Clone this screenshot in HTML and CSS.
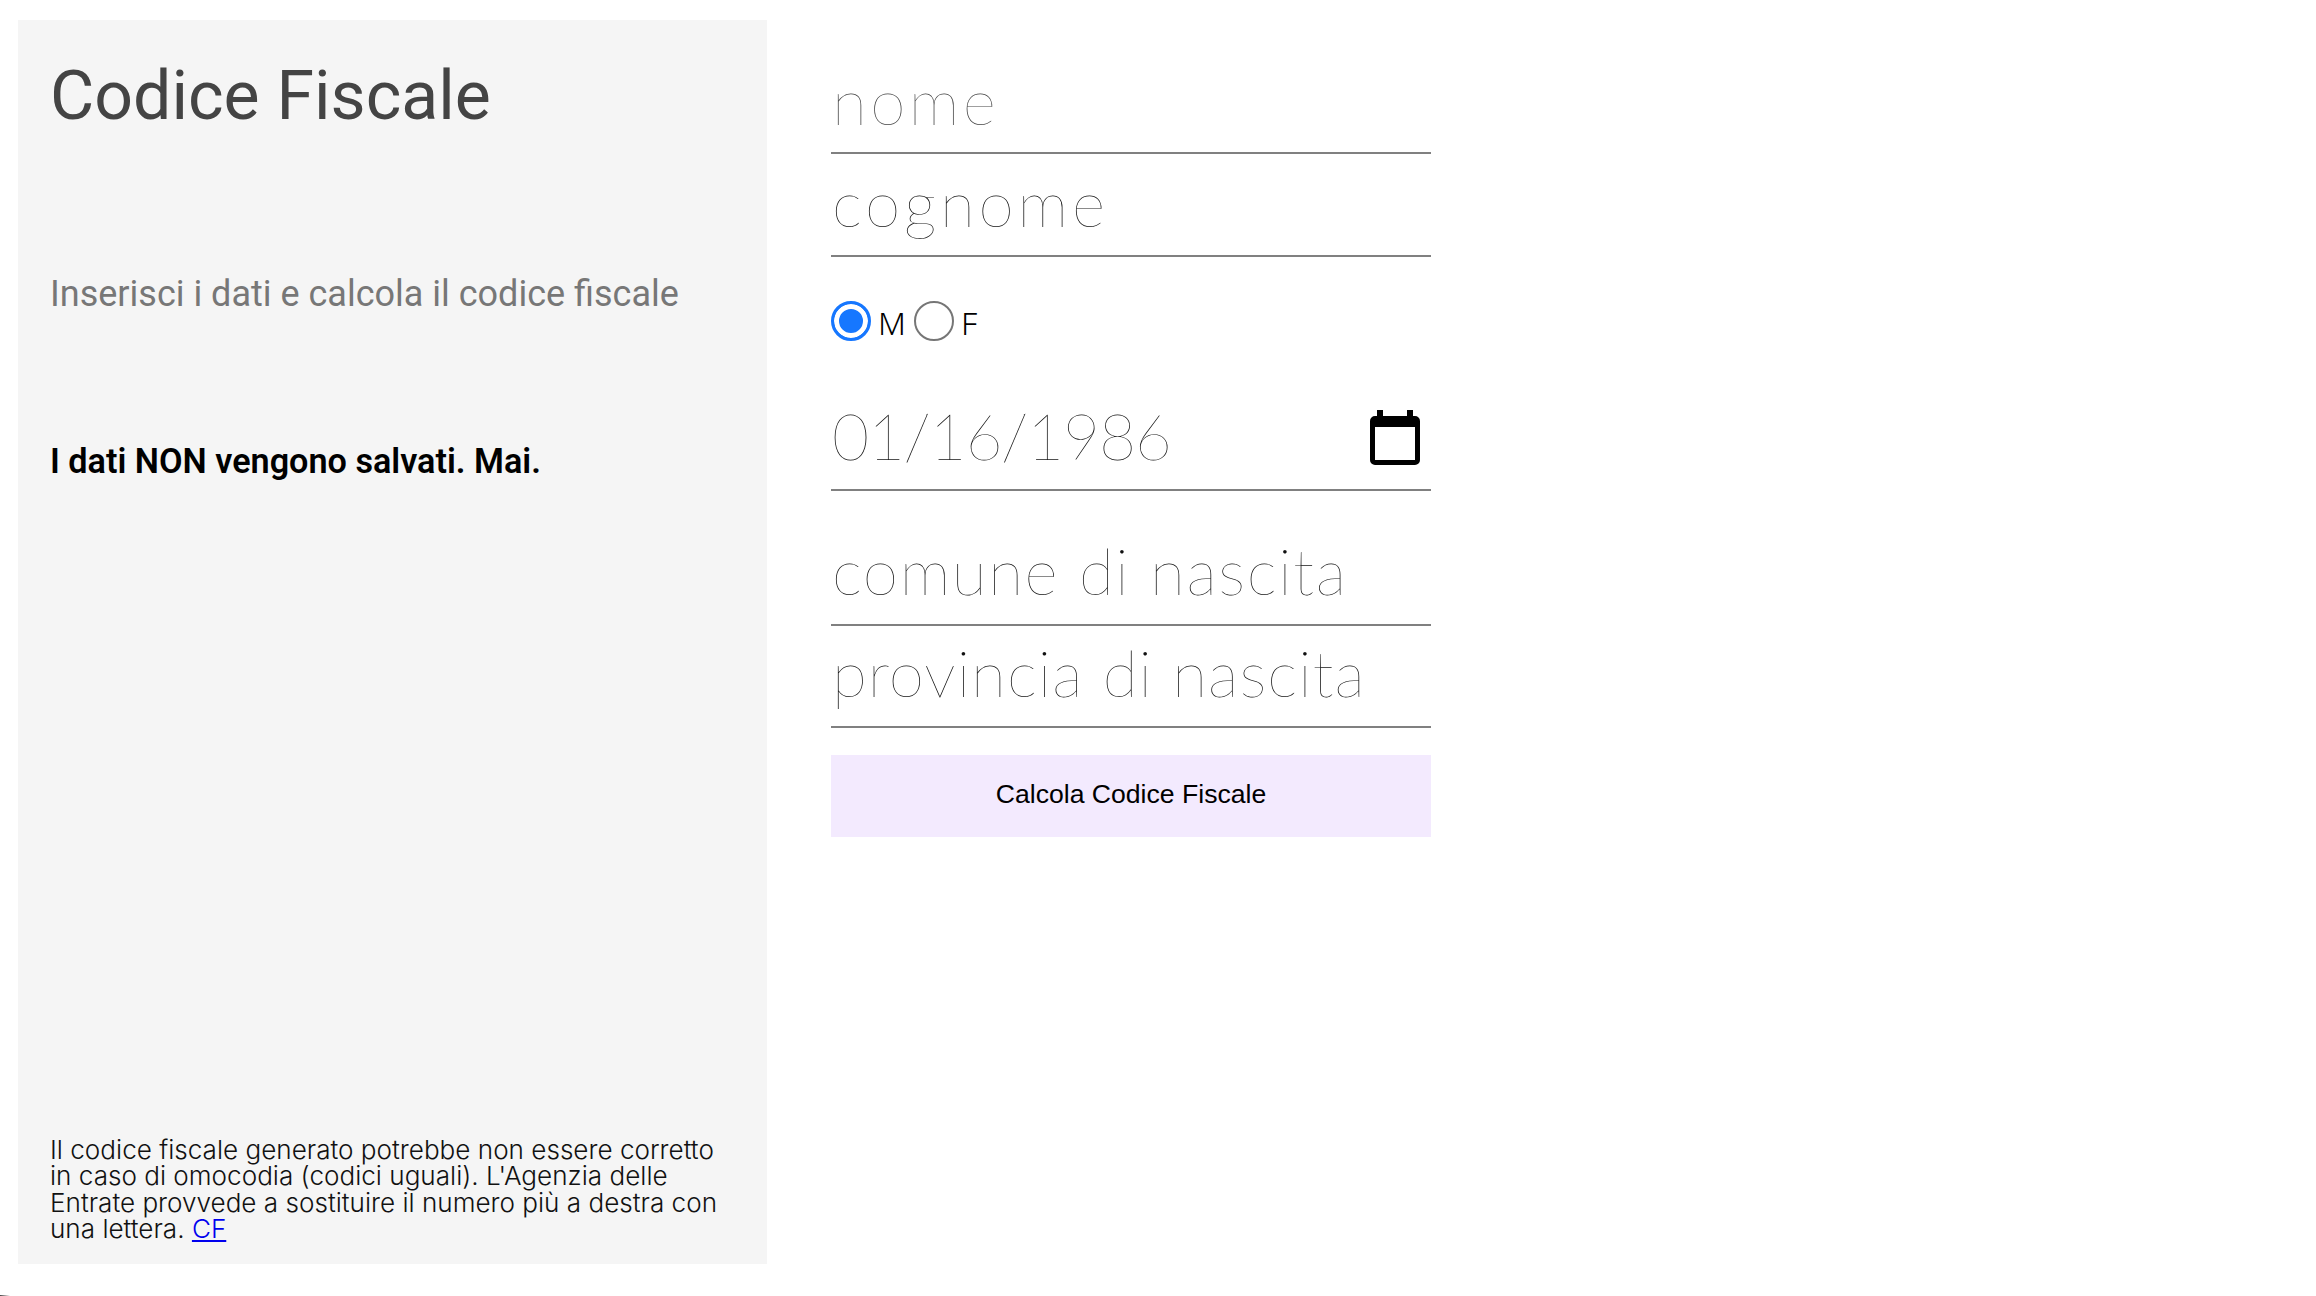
FILE: index.html
```html
<!DOCTYPE html>
<html lang="it">
<head>
    <meta charset="UTF-8">
    <title>Codice Fiscale</title>
    <link rel="stylesheet" href="styles.css">
</head>
<body>
<div class="page">
    <div class="side">
        <h1>Codice Fiscale</h1>
        <p class="intro">Inserisci i dati e calcola il codice fiscale</p>
        <p class="notice">I dati NON vengono salvati. Mai.</p>
        <p class="note">Il codice fiscale generato potrebbe non essere corretto in caso di omocodia (codici uguali). L'Agenzia delle Entrate provvede a sostituire il numero più a destra con una lettera. <a href="#">CF</a></p>
    </div>
    <form class="form">
        <div class="field field-nome">nome</div>
        <div class="field field-cognome">cognome</div>
        <div class="gender">
            <input type="radio" name="sex" id="m" checked>
            <label for="m">M</label>
            <input type="radio" name="sex" id="f">
            <label for="f">F</label>
        </div>
        <div class="field field-date">
            <span>01/16/1986</span>
            <svg class="cal" viewBox="0 0 50 55" width="50" height="55">
                <path d="M7 0h6v6h24V0h6v6h2a5 5 0 0 1 5 5v39a5 5 0 0 1-5 5H5a5 5 0 0 1-5-5V11a5 5 0 0 1 5-5h2z M5 17v33h40V17z" fill="#000" fill-rule="evenodd"/>
            </svg>
        </div>
        <div class="field field-comune">comune di nascita</div>
        <div class="field field-provincia">provincia di nascita</div>
        <button type="button" class="calc">Calcola Codice Fiscale</button>
    </form>
</div>
<div class="corner"></div>
</body>
</html>
```

FILE: styles.css
```css
*{
    margin: 0;
    padding: 0;
    box-sizing: border-box;
}
body{
    background: #fff;
}
.page{
    display: flex;
    padding: 20px 0 0 18px;
}
.side{
    display: flex;
    flex-direction: column;
    width: 749px;
    height: 1244px;
    padding: 0 30px 21px 32px;
    background: #f5f5f5;
    font-family: Roboto, sans-serif;
}
h1{
    margin-top: 36px;
    font-size: 68px;
    line-height: 80px;
    font-weight: 400;
    color: #444;
}
.intro{
    margin-top: 136px;
    font-size: 36px;
    line-height: 44px;
    font-weight: 400;
    color: #777;
}
.notice{
    margin-top: 125px;
    font-size: 34.2px;
    line-height: 40px;
    font-weight: 600;
    color: #000;
}
.note{
    margin-top: auto;
    font-family: Inter, sans-serif;
    font-size: 26.1px;
    line-height: 26.6px;
    font-weight: 300;
    color: #111;
}
.note a{
    color: #0000ee;
}
.form{
    width: 600px;
    margin-left: 64px;
}
.field{
    display: flex;
    justify-content: space-between;
    align-items: flex-end;
    padding: 0 0 21px 1px;
    border-bottom: 2px solid #808080;
    font-family: Lato, sans-serif;
    font-size: 64px;
    line-height: 64px;
    font-weight: 100;
    color: #111;
}
.field-nome{
    height: 134px;
    padding-bottom: 19px;
    letter-spacing: 3.4px;
    color: #444;
}
.field-cognome{
    height: 103px;
    padding-bottom: 20px;
    letter-spacing: 3.8px;
}
.gender{
    display: flex;
    align-items: center;
    height: 40px;
    margin-top: 44px;
    font-family: "Noto Sans", sans-serif;
    font-size: 32px;
    font-weight: 300;
    color: #000;
}
.gender input{
    appearance: none;
    width: 40px;
    height: 40px;
    border: 2.5px solid #767676;
    border-radius: 50%;
    background: #fff;
}
.gender input:checked{
    border: 3px solid #1677ff;
    box-shadow: inset 0 0 0 5px #fff;
    background: #1677ff;
}
.gender label{
    margin: 4px 8px 0 7px;
    line-height: 36px;
}
.field-date{
    height: 150px;
    padding: 0 11px 21px 1px;
    letter-spacing: -1.2px;
}
.cal{
    display: block;
    margin-bottom: 3px;
}
.field-comune{
    height: 135px;
    letter-spacing: 1.6px;
}
.field-provincia{
    height: 102px;
    letter-spacing: 1.05px;
}
.calc{
    display: block;
    width: 100%;
    height: 82px;
    margin-top: 27px;
    padding-bottom: 3px;
    border: 0;
    background: #f3eafe;
    font-family: "Liberation Sans", sans-serif;
    font-size: 26.6px;
    color: #000;
}
.corner{
    position: fixed;
    left: 0;
    bottom: 0;
    width: 10px;
    height: 1px;
    background: linear-gradient(to right, #444, transparent);
}
```
